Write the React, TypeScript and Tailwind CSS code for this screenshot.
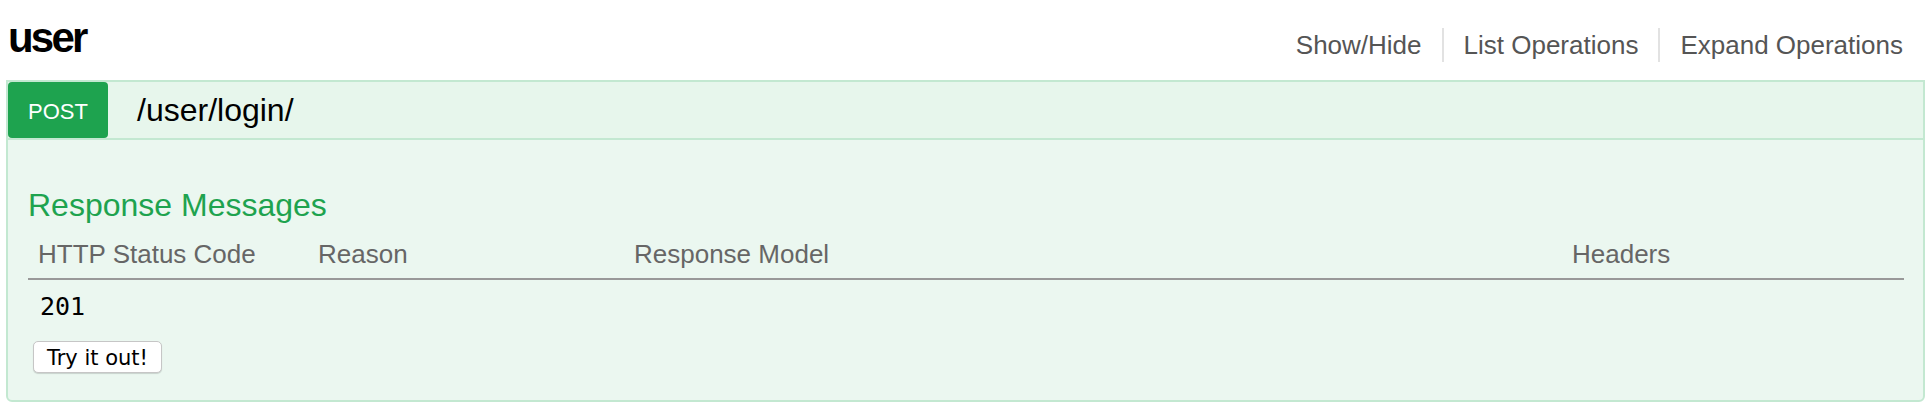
const columns = [
  { label: "HTTP Status Code", width: "w-[280px]" },
  { label: "Reason", width: "w-[316px]" },
  { label: "Response Model", width: "w-[938px]" },
  { label: "Headers", width: "w-[342px]" },
];

const OperationHeading = () => {
  return (
    <div className="flex h-[58px] items-start border-b-2 border-[#c3e8d1] bg-[#e7f6ec]">
      <span className="block h-[56px] w-[100px] rounded-[4px] bg-[#1ea34f] pt-[4px] text-center text-[22px] leading-[52px] text-white">
        POST
      </span>
      <span className="pl-[29px] text-[32px] leading-[56px] text-black">/user/login/</span>
    </div>
  );
};

const ResponseTable = () => {
  return (
    <table className="w-[1876px] table-fixed border-collapse">
      <colgroup>
        {columns.map((c) => (
          <col key={c.label} className={c.width} />
        ))}
      </colgroup>
      <thead>
        <tr className="border-b-2 border-[#999]">
          {columns.map((c) => (
            <th key={c.label} className="pb-[9px] pl-[10px] text-left text-[26px] font-normal leading-[30px] text-[#666]">
              {c.label}
            </th>
          ))}
        </tr>
      </thead>
      <tbody>
        <tr>
          <td className="pl-[12px] pt-[13px] font-['DejaVu_Sans_Mono',monospace] text-[25px] leading-[28px] text-black">201</td>
          <td></td>
          <td></td>
          <td></td>
        </tr>
      </tbody>
    </table>
  );
};

export default function App() {
  const links = ["Show/Hide", "List Operations", "Expand Operations"];
  return (
    <div className="h-[404px] w-full overflow-hidden bg-white font-['Liberation_Sans',Arial,sans-serif]">
      <div className="flex h-[80px] items-start justify-between">
        <h2 className="pl-[8px] pt-[17px] text-[42px] font-bold leading-[42px] tracking-[-2.8px] text-black">user</h2>
        <ul className="mt-[28px] flex pr-[23px]">
          {links.map((l, i) => (
            <li
              key={l}
              className={
                i === 0
                  ? "pr-[20px] text-[26px] leading-[34px] text-[#555]"
                  : i === links.length - 1
                  ? "border-l-2 border-[#e2e2e2] pl-[20px] text-[26px] leading-[34px] text-[#555]"
                  : "border-l-2 border-[#e2e2e2] px-[20px] text-[26px] leading-[34px] text-[#555]"
              }
            >
              {l}
            </li>
          ))}
        </ul>
      </div>

      <div className="ml-[6px] mr-[1px] h-[322px] rounded-b-[6px] border-2 border-[#c3e8d1] bg-[#ebf7f0]">
        <OperationHeading />
        <div className="px-[20px] pt-[48px]">
          <h4 className="text-[32px] leading-[34px] text-[#1ea34f]">Response Messages</h4>
          <div className="mt-[17px]">
            <ResponseTable />
          </div>
          <button className="ml-[5px] mt-[20px] block h-[32px] w-[129px] rounded-[5px] border border-[#c6c6c6] bg-white pt-[3px] text-center font-['DejaVu_Sans',sans-serif] text-[21px] leading-[27px] text-black shadow-[0_1px_1px_rgba(0,0,0,0.15)]">
            Try it out!
          </button>
        </div>
      </div>
    </div>
  );
}
